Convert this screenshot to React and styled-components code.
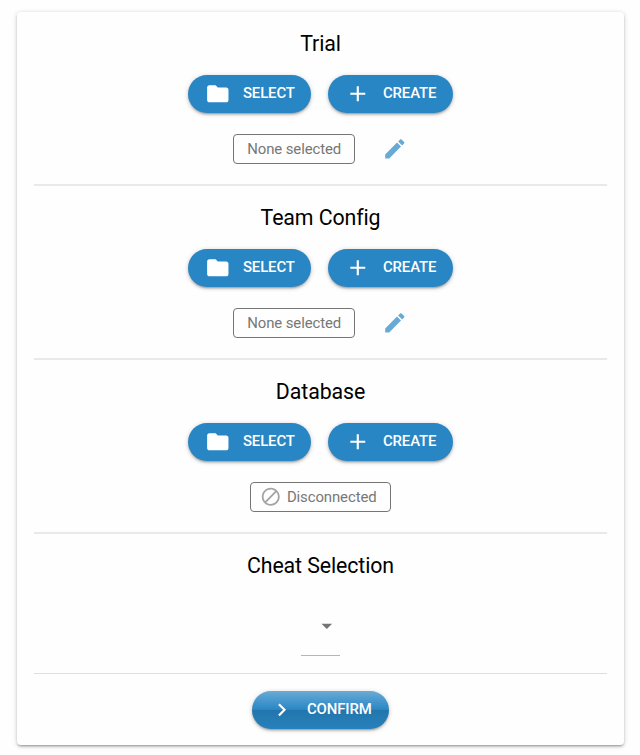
import React from "react";
import styled, { createGlobalStyle, css } from "styled-components";

const GlobalStyle = createGlobalStyle`
  * { box-sizing: border-box; }
  body {
    margin: 0;
    background: #fefefe;
    font-family: Roboto, "Liberation Sans", sans-serif;
    color: #000;
  }
`;

const Page = styled.main`
  height: 755px;
  padding: 12px 16px 10px 17px;
`;

const Card = styled.div`
  height: 733px;
  padding: 0 17px;
  background: #fefefe;
  border-radius: 4px;
  box-shadow: 0 1px 5px rgba(0, 0, 0, 0.2), 0 2px 2px rgba(0, 0, 0, 0.14),
    0 3px 1px -2px rgba(0, 0, 0, 0.12);
`;

const Section = styled.section`
  display: flex;
  flex-direction: column;
  align-items: center;
  height: ${(p) => p.$height || 174}px;
  padding-top: 17px;
  border-bottom: ${(p) => (p.$thin ? "1px solid #dedede" : "2px solid #e9e9e9")};
`;

const Title = styled.h2`
  margin: 0;
  font-size: 21.33px;
  font-weight: 400;
  line-height: 29px;
  letter-spacing: -0.1px;
`;

const ButtonRow = styled.div`
  display: flex;
  gap: 17px;
  margin-top: 17px;
`;

const StatusRow = styled.div`
  display: flex;
  align-items: center;
  gap: 27px;
  height: 30px;
  margin-top: 21px;
`;

const Icon = styled.svg`
  display: block;
  flex: none;
  width: ${(p) => p.$size || 25.6}px;
  height: ${(p) => p.$size || 25.6}px;
  fill: currentColor;
`;

const Button = styled.button`
  display: flex;
  align-items: center;
  gap: 12.5px;
  width: ${(p) => p.$width}px;
  height: 38px;
  padding: 0 0 0 16.8px;
  border: 0;
  border-radius: 19px;
  background: #2886c4;
  color: #fff;
  font: 500 14.93px Roboto, "Liberation Sans", sans-serif;
  letter-spacing: -0.1px;
  box-shadow: 0 1px 5px rgba(0, 0, 0, 0.2), 0 2px 2px rgba(0, 0, 0, 0.14),
    0 3px 1px -2px rgba(0, 0, 0, 0.12);
  ${(p) =>
    p.$glossy &&
    css`
      background: linear-gradient(
          rgba(255, 255, 255, 0.3),
          rgba(255, 255, 255, 0) 50%,
          rgba(0, 0, 0, 0.12) 51%,
          rgba(0, 0, 0, 0.04)
        ),
        #2886c4;
    `}
`;

const Label = styled.span`
  padding-bottom: 2px;
`;

const Chip = styled.div`
  display: flex;
  align-items: center;
  justify-content: center;
  gap: 5px;
  width: ${(p) => p.$width}px;
  height: 30px;
  border: 1px solid #757575;
  border-radius: 4px;
  color: #777;
  font-size: 14.93px;
  letter-spacing: -0.1px;
`;

const StateChip = styled(Chip)`
  justify-content: flex-start;
  padding-left: 9.4px;
`;

const BlockIcon = styled(Icon)`
  color: #a3a3a3;
`;

const EditButton = styled.button`
  display: flex;
  padding: 0;
  border: 0;
  background: none;
  color: #68aad6;
`;

const Dropdown = styled.div`
  display: flex;
  align-items: center;
  justify-content: flex-end;
  width: 39px;
  height: 60px;
  margin-top: 16px;
  border-bottom: 1px solid #b5b5b5;
  color: #757575;
`;

const Footer = styled.footer`
  display: flex;
  justify-content: center;
  padding-top: 17px;
`;

const PATHS = {
  folder:
    "M10 4H4c-1.1 0-1.99.9-1.99 2L2 18c0 1.1.9 2 2 2h16c1.1 0 2-.9 2-2V8c0-1.1-.9-2-2-2h-8l-2-2z",
  add: "M19 13h-6v6h-2v-6H5v-2h6V5h2v6h6v2z",
  edit: "M3 17.25V21h3.75L17.81 9.94l-3.75-3.75L3 17.25zM20.71 7.04c.39-.39.39-1.02 0-1.41l-2.34-2.34c-.39-.39-1.02-.39-1.41 0l-1.83 1.83 3.75 3.75 1.83-1.83z",
  chevron: "M10 6L8.59 7.41 13.17 12l-4.58 4.59L10 18l6-6z",
  arrow: "M7 10l5 5 5-5z",
};

function Glyph({ name, size }) {
  return (
    <Icon viewBox="0 0 24 24" $size={size} aria-hidden="true">
      <path d={PATHS[name]} />
    </Icon>
  );
}

function ActionButton({ icon, label, width, glossy }) {
  return (
    <Button type="button" $width={width} $glossy={glossy}>
      <Glyph name={icon} />
      <Label>{label}</Label>
    </Button>
  );
}

function ConfigSection({ title, children }) {
  return (
    <Section>
      <Title>{title}</Title>
      <ButtonRow>
        <ActionButton icon="folder" label="SELECT" width={123} />
        <ActionButton icon="add" label="CREATE" width={125} />
      </ButtonRow>
      <StatusRow>{children}</StatusRow>
    </Section>
  );
}

function FileStatus({ name }) {
  return (
    <>
      <Chip $width={122}>None selected</Chip>
      <EditButton type="button" aria-label={`Edit ${name}`}>
        <Glyph name="edit" />
      </EditButton>
    </>
  );
}

export default function App() {
  return (
    <Page>
      <GlobalStyle />
      <Card>
        <ConfigSection title="Trial">
          <FileStatus name="trial" />
        </ConfigSection>
        <ConfigSection title="Team Config">
          <FileStatus name="team config" />
        </ConfigSection>
        <ConfigSection title="Database">
          <StateChip $width={141}>
            <BlockIcon viewBox="0 0 24 24" $size={21.5} aria-hidden="true">
              <path d="M12 2C6.48 2 2 6.48 2 12s4.48 10 10 10 10-4.48 10-10S17.52 2 12 2zM4 12c0-4.42 3.58-8 8-8 1.85 0 3.55.63 4.9 1.69L5.69 16.9C4.63 15.55 4 13.85 4 12zm8 8c-1.85 0-3.55-.63-4.9-1.69L18.31 7.1C19.37 8.45 20 10.15 20 12c0 4.42-3.58 8-8 8z" />
            </BlockIcon>
            Disconnected
          </StateChip>
        </ConfigSection>
        <Section $height={140} $thin>
          <Title>Cheat Selection</Title>
          <Dropdown role="combobox" aria-label="Cheat selection">
            <Glyph name="arrow" />
          </Dropdown>
        </Section>
        <Footer>
          <ActionButton icon="chevron" label="CONFIRM" width={137} glossy />
        </Footer>
      </Card>
    </Page>
  );
}
